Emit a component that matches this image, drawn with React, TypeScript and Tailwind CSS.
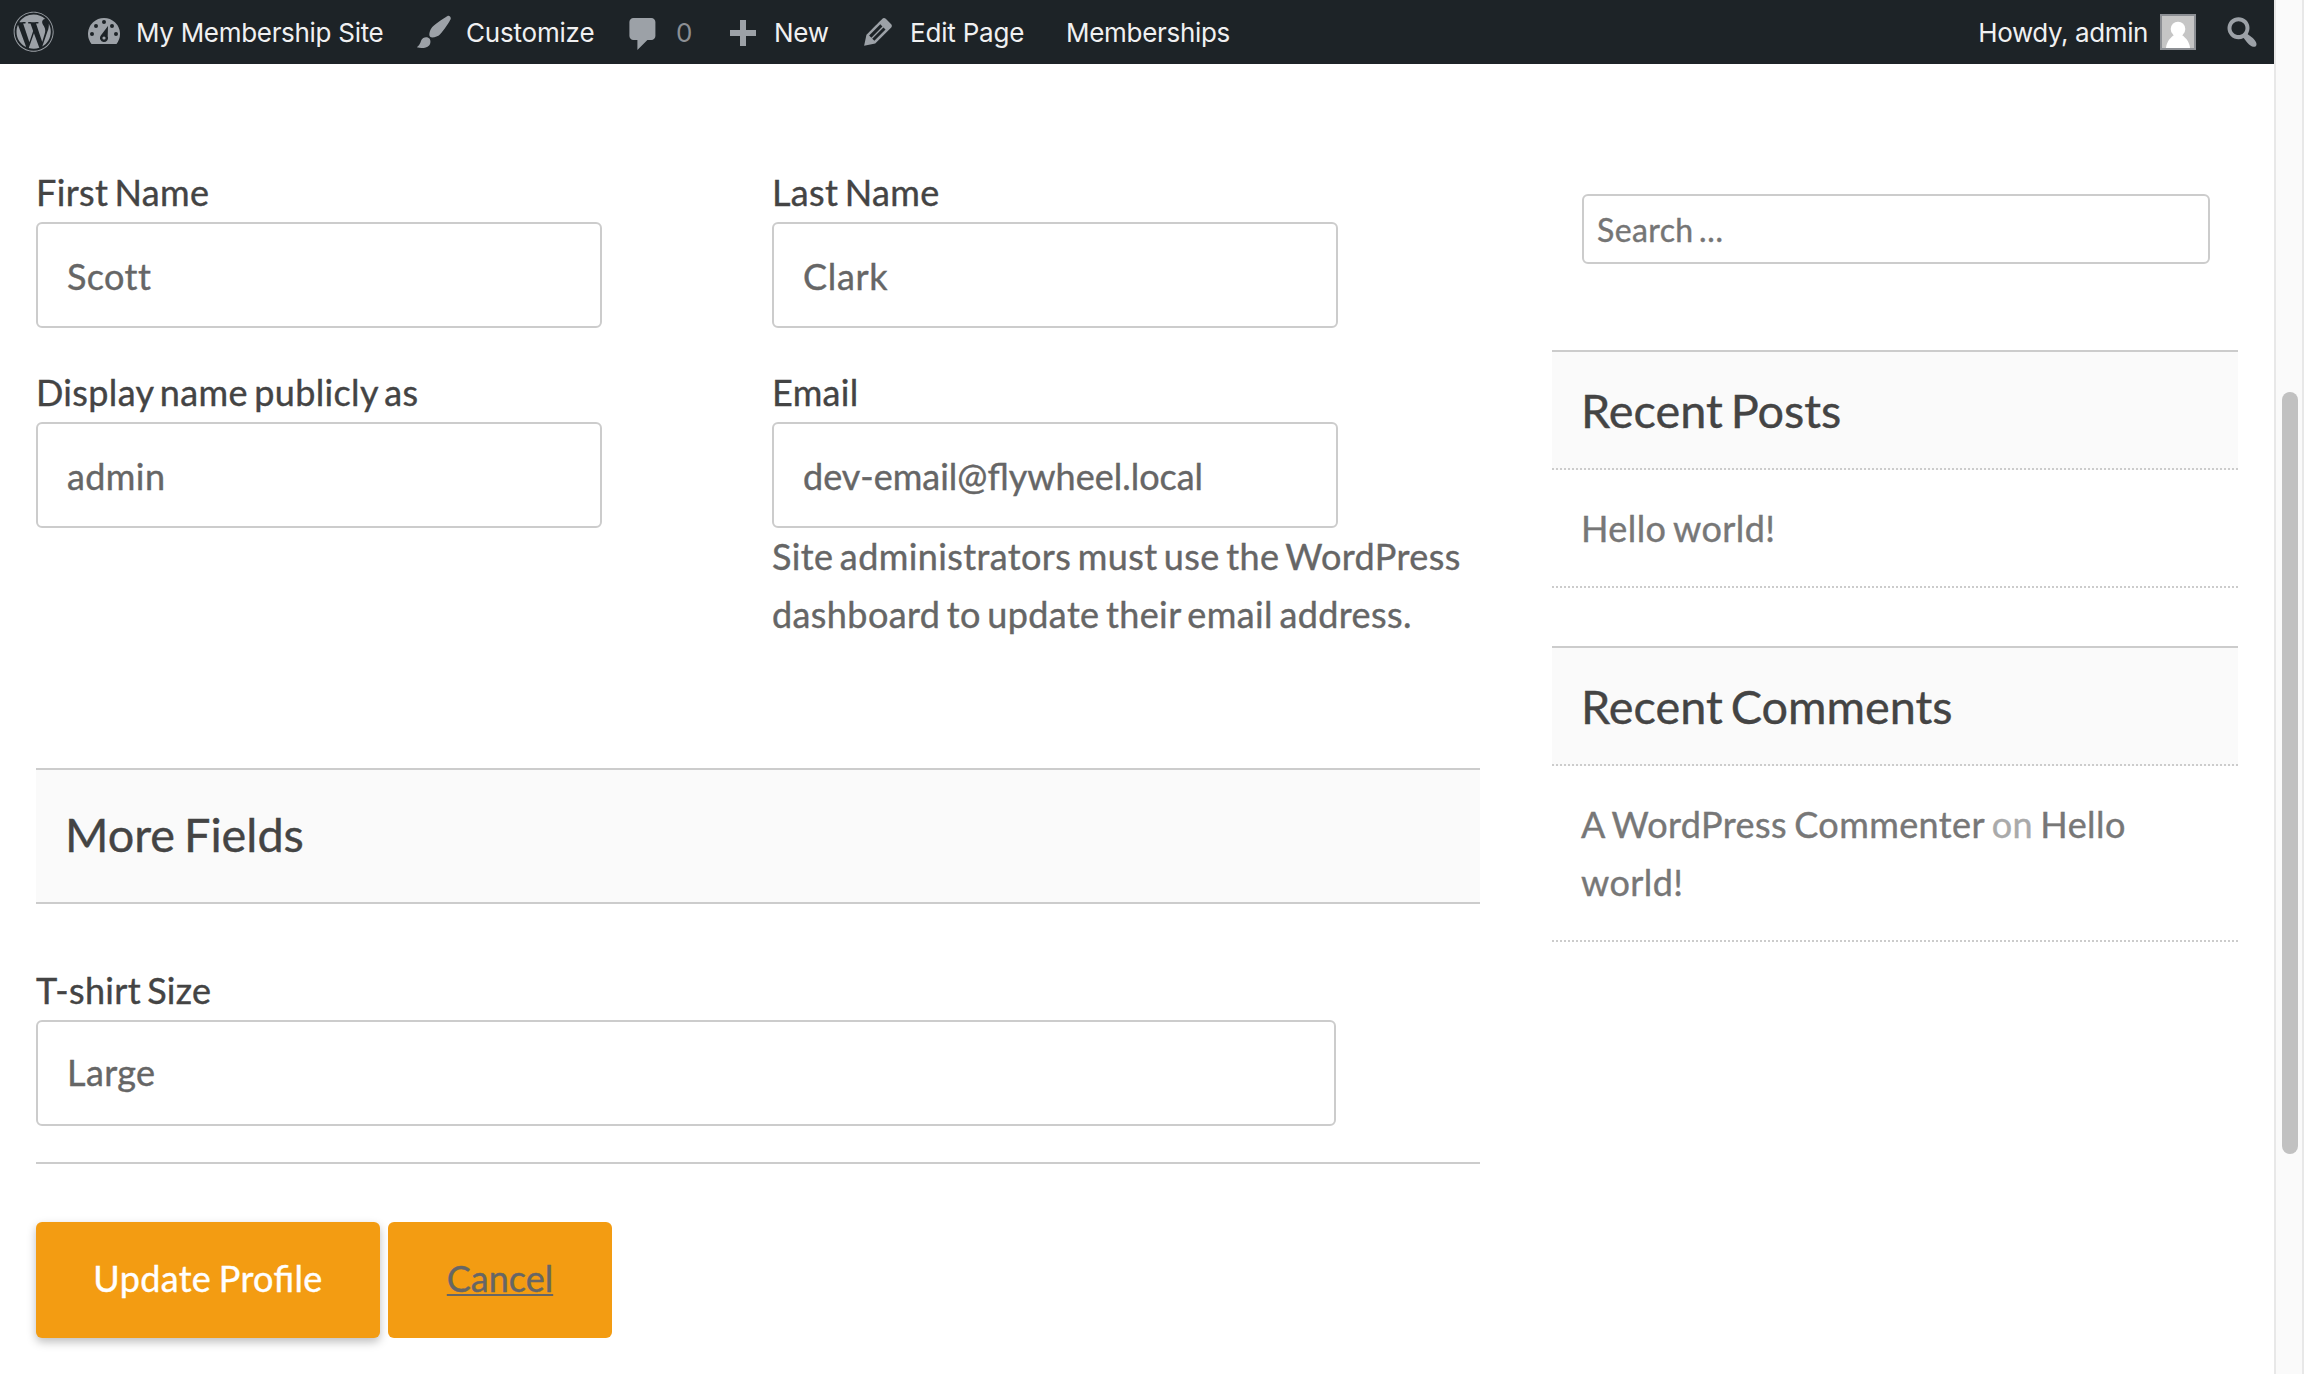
import type { ReactNode } from "react";
import { FaWordpress } from "react-icons/fa";

function Dashicon({ children, className = "" }: { children: ReactNode; className?: string }) {
  return (
    <svg viewBox="0 0 20 20" className={`size-10 shrink-0 fill-[#9ca1a7] ${className}`} aria-hidden="true">
      {children}
    </svg>
  );
}

function AdminBar() {
  return (
    <header className="flex h-16 shrink-0 bg-[#1d2327] font-[Inter,sans-serif] text-[26px] leading-[66px] tracking-[-0.3px] whitespace-nowrap text-[#f0f0f1]">
      <a className="flex w-[84px] items-center pl-[13px]">
        <FaWordpress className="size-[41.3px] text-[#9ca1a7]" />
      </a>
      <a className="flex w-[330px]">
        <Dashicon className="mt-[10px] mr-3">
          <path
            fillRule="evenodd"
            d="M3.76 17h12.48A8 8 0 1 0 3.76 17zM10 5a1 1 0 1 1 0 2 1 1 0 0 1 0-2zM6 7a1 1 0 1 1 0 2 1 1 0 0 1 0-2zM14 7a1 1 0 1 1 0 2 1 1 0 0 1 0-2zM4 11a1 1 0 1 1 0 2 1 1 0 0 1 0-2zM16 11a1 1 0 1 1 0 2 1 1 0 0 1 0-2zM12 8l-.15 5.25A2 2 0 1 1 8.4 12.8zM10 13.2a.8.8 0 1 0 0 1.6.8.8 0 0 0 0-1.6z"
          />
        </Dashicon>
        <span>My Membership Site</span>
      </a>
      <a className="flex w-[209px]">
        <Dashicon className="mt-3 mr-3">
          <path d="M18.33 3.57s.27-.8-.31-1.36c-.53-.52-1.22-.24-1.22-.24-.61.3-5.76 3.47-7.67 5.57-.86.96-2.06 3.79-1.09 4.82.92.98 3.96-.17 4.79-1 2.06-2.06 5.21-7.17 5.5-7.79zM1.4 17.65c2.37-1.56 1.46-3.41 3.23-4.64.93-.65 2.22-.62 3.08.29.63.67.8 2.57-.16 3.46-1.57 1.45-4 1.55-6.15.89z" />
        </Dashicon>
        <span className="tracking-[-0.2px]">Customize</span>
      </a>
      <a className="flex w-[100px]">
        <Dashicon className="mt-[14px] mr-[13px]">
          <path d="M5.2 2h9c1.1 0 2 .9 2 2v7c0 1.1-.9 2-2 2h-2l-5 5v-5h-2c-1.1 0-2-.9-2-2V4c0-1.1.9-2 2-2z" />
        </Dashicon>
        <span className="text-[#8c8f94]">0</span>
      </a>
      <a className="flex w-[135px]">
        <Dashicon className="mt-[13px] mr-[11px]">
          <path d="M8.5 3.5h3v5h5v3h-5v5h-3v-5h-5v-3h5z" />
        </Dashicon>
        <span>New</span>
      </a>
      <a className="flex w-[208px]">
        <Dashicon className="mt-3 mr-3">
          <path d="M13.89 3.39l2.71 2.72c.46.46.42 1.24.03 1.64l-8.01 8.02-5.56 1.16 1.16-5.58s7.6-7.63 7.99-8.03c.39-.39 1.22-.39 1.68.07zm-2.73 2.79l-5.59 5.61 1.11 1.11 5.54-5.65zm-2.97 8.23l5.58-5.6-1.07-1.08-5.59 5.6z" />
        </Dashicon>
        <span className="tracking-[-0.2px]">Edit Page</span>
      </a>
      <a>Memberships</a>
      <a className="ml-auto flex">
        <span className="tracking-[-0.4px]">Howdy, admin</span>
        <svg viewBox="0 0 36 36" className="mt-[14px] ml-3 size-9" aria-hidden="true">
          <path fill="#8c8f94" d="M0 0h36v36H0z" />
          <path fill="#c5c5c5" d="M2 2h32v32H2z" />
          <circle cx="18" cy="15" r="7.3" fill="#fff" />
          <path fill="#fff" d="M6 34c.6-6 3.500-9.500 8-13h8c4.500 3.500 7.400 7 8 13z" />
        </svg>
      </a>
      <a className="flex w-[78px] pl-[26px]">
        <Dashicon className="mt-3">
          <path d="M12.140 4.180c1.870 1.870 2.110 4.750.720 6.890.120.100.220.210.360.310.200.160.470.360.810.590.340.240.560.390.660.470.420.310.730.570.940.780.320.320.600.650.840 1 .250.350.440.690.590 1.040.140.350.210.680.180 1-.020.320-.140.590-.360.810s-.490.340-.810.360c-.310.020-.650-.040-.990-.190-.350-.140-.700-.340-1.040-.590-.350-.240-.680-.520-1-.840-.210-.210-.470-.520-.770-.930-.100-.130-.250-.350-.470-.660-.220-.320-.400-.570-.560-.780-.160-.200-.290-.350-.440-.500-2.070 1.090-4.690.760-6.440-.980-2.140-2.150-2.140-5.640 0-7.780 2.150-2.150 5.630-2.150 7.780 0zm-1.410 6.360c1.360-1.370 1.360-3.580 0-4.950-1.370-1.370-3.590-1.370-4.950 0-1.370 1.370-1.370 3.580 0 4.950 1.360 1.360 3.580 1.360 4.950 0z" />
        </Dashicon>
      </a>
    </header>
  );
}

function Field({ label, value, help, valueClass = "" }: { label: string; value: string; help?: string; valueClass?: string }) {
  return (
    <div>
      <label className="block h-[58px] leading-[56px] tracking-[0.35px] text-[#444]">{label}</label>
      <div className={`h-[106px] w-[566px] rounded-md border-2 border-[#ccc] bg-white pt-[23px] pl-[29px] leading-[58px] ${valueClass}`}>
        {value}
      </div>
      {help && <p className="w-[700px] leading-[57.6px]">{help}</p>}
    </div>
  );
}

function Widget({ title, children, className = "" }: { title: string; children: ReactNode; className?: string }) {
  return (
    <section className={className}>
      <h3 className="h-[120px] border-t-2 border-b-2 border-t-[#ccc] border-b-[#ccc] bg-[#fafafa] pl-[29px] text-[46.800px] leading-[116px] tracking-normal text-[#444] [border-bottom-style:dotted] [word-spacing:-4px]">
        {title}
      </h3>
      <div className="border-b-2 border-dotted border-[#ccc] pt-[30px] pr-[30px] pb-[28.800px] pl-[29px] text-[#777] [word-spacing:-2.200px]">
        {children}
      </div>
    </section>
  );
}

export default function App() {
  return (
    <div className="flex h-[1374px] w-[2304px] overflow-hidden bg-white font-[Lato,sans-serif] text-[36px] leading-[57.6px] text-[#666]">
      <div className="flex w-[2274px] flex-col">
        <AdminBar />
        <div className="flex pl-9 tracking-[0.4px] [-webkit-text-stroke:0.4px] [word-spacing:-3.200px]">
          <main className="w-[1444px] pt-[100px]">
            <div className="grid h-[604px] grid-cols-[736px_1fr] grid-rows-[200px_1fr]">
              <Field label="First Name" value="Scott" />
              <Field label="Last Name" value="Clark" valueClass="tracking-[0.7px]" />
              <Field label="Display name publicly as" value="admin" />
              <Field
                label="Email"
                value="dev-email@flywheel.local"
                valueClass="tracking-normal"
                help="Site administrators must use the WordPress dashboard to update their email address."
              />
            </div>
            <h2 className="h-[136px] border-y-2 border-[#ccc] bg-[#fafafa] pl-[29px] text-[46.800px] leading-[129px] tracking-normal text-[#444] [word-spacing:-3px]">
              More Fields
            </h2>
            <div className="pt-[58px]">
              <label className="block h-[58px] leading-[56px] tracking-[0.3px] text-[#444]">T-shirt Size</label>
              <div className="h-[106px] w-[1300px] rounded-md border-2 border-[#ccc] bg-white pt-[21px] pl-[29px] leading-[58px]">Large</div>
            </div>
            <hr className="mt-9 border-t-2 border-[#ccc]" />
            <div className="mt-[58px] flex gap-2">
              <button className="h-[116px] w-[344px] rounded-md bg-[#f39c12] pb-[2px] tracking-[0.35px] text-white shadow-[0_4px_10px_rgba(0,0,0,0.26)] [font-feature-settings:'liga'_1] [word-spacing:-2px]">
                Update Profile
              </button>
              <a className="flex h-[116px] w-[224px] items-center justify-center rounded-md bg-[#f39c12] pb-[2px] tracking-normal underline decoration-2 underline-offset-2">
                Cancel
              </a>
            </div>
          </main>
          <aside className="ml-[72px] w-[686px] pt-[130px]">
            <div className="mx-[30px] h-[70px] w-[628px] rounded-md border-2 border-[#ccc] bg-white pl-[13px] text-[32px] leading-[67px] text-[#757575]">
              Search …
            </div>
            <Widget title="Recent Posts" className="mt-[86px]">
              Hello world!
            </Widget>
            <Widget title="Recent Comments" className="mt-[57.600px]">
              A WordPress Commenter <span className="text-[#aaa]">on</span> Hello world!
            </Widget>
          </aside>
        </div>
      </div>
      <div className="w-[30px] border-x-2 border-[#e8e8e8] bg-[#fafafa] pt-[392px] pl-1.5">
        <div className="h-[762px] w-4 rounded-full bg-[#c1c1c1]" />
      </div>
    </div>
  );
}
